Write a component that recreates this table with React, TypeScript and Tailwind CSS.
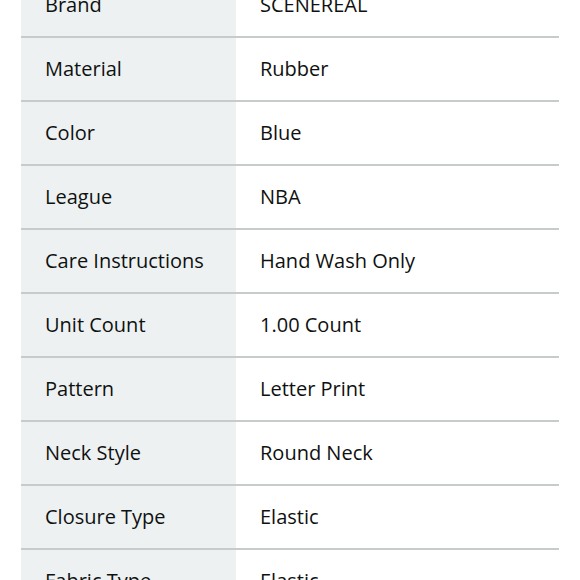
import React from 'react';

const specs: [string, string][] = [
  ['Brand', 'SCENEREAL'],
  ['Material', 'Rubber'],
  ['Color', 'Blue'],
  ['League', 'NBA'],
  ['Care Instructions', 'Hand Wash Only'],
  ['Unit Count', '1.00 Count'],
  ['Pattern', 'Letter Print'],
  ['Neck Style', 'Round Neck'],
  ['Closure Type', 'Elastic'],
  ['Fabric Type', 'Elastic'],
];

export default function App() {
  return (
    <div className="w-[580px] h-[580px] overflow-hidden bg-white" style={{ fontFamily: '"Open Sans", "Noto Sans", sans-serif' }}>
      <div className="ml-[21px] w-[538px] -mt-[26px]">
        {specs.map(([k, v]) => (
          <div key={k} className="flex h-[64px] border-b-2 border-[#c8cbcb] text-[20px] text-[#0f1111]">
            <div className="w-[215px] bg-[#eef1f1] pl-[24px] flex items-center">{k}</div>
            <div className="flex-1 pl-[24px] flex items-center">{v}</div>
          </div>
        ))}
      </div>
    </div>
  );
}
